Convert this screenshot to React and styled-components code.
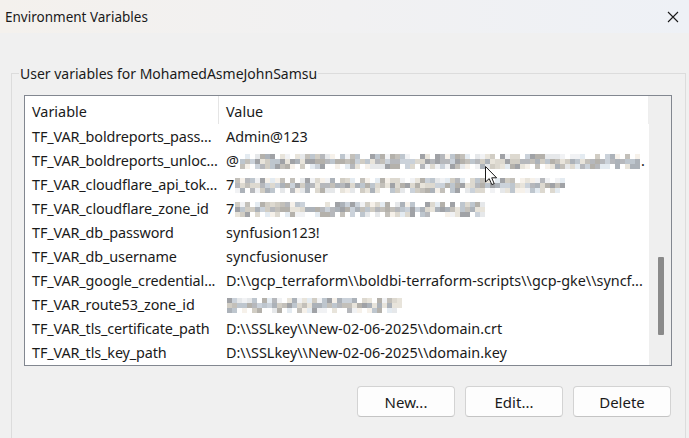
import React from "react";
import styled, { createGlobalStyle } from "styled-components";

const GlobalStyle = createGlobalStyle`
  html, body {
    margin: 0;
    padding: 0;
    background: #f0f0f0;
  }
  * {
    box-sizing: border-box;
  }
`;

const rows = [
  { name: "TF_VAR_boldreports_pass...", value: "Admin@123" },
  { name: "TF_VAR_boldreports_unloc...", lead: "@", blur: 404, seed: 3, tail: "." },
  { name: "TF_VAR_cloudflare_api_tok...", lead: "7", blur: 331, seed: 7 },
  { name: "TF_VAR_cloudflare_zone_id", lead: "7", blur: 251, seed: 11 },
  { name: "TF_VAR_db_password", value: "synfusion123!" },
  { name: "TF_VAR_db_username", value: "syncfusionuser" },
  {
    name: "TF_VAR_google_credential...",
    value: "D:\\\\gcp_terraform\\\\boldbi-terraform-scripts\\\\gcp-gke\\\\syncf...",
  },
  { name: "TF_VAR_route53_zone_id", blur: 178, seed: 19 },
  { name: "TF_VAR_tls_certificate_path", value: "D:\\\\SSLkey\\\\New-02-06-2025\\\\domain.crt" },
  { name: "TF_VAR_tls_key_path", value: "D:\\\\SSLkey\\\\New-02-06-2025\\\\domain.key" },
];

// pixelated (redacted) value, drawn as a mosaic of blocks
const palette = ["#a9acb0", "#b8b5ae", "#c9c4ba", "#9ea4ad", "#d7d2c8", "#b3bcc6", "#8f9296", "#c2cad3", "#e4dfd5", "#a7a39c"];
const light = ["#ffffff", "#eef0f2", "#e2e4e6", "#f4efe6", "#dfe7ef", "#ffffff", "#ffffff"];

function Mosaic({ width, seed }) {
  const cols = Math.floor(width / 5);
  let s = seed * 9301 + 49297;
  const rnd = () => {
    s = (s * 9301 + 49297) % 233280;
    return s / 233280;
  };
  const grid = [0, 1, 2].map((r) =>
    Array.from({ length: cols }, () => {
      if (r === 1) return palette[Math.floor(rnd() * palette.length)];
      return rnd() > 0.45 ? palette[Math.floor(rnd() * palette.length)] : light[Math.floor(rnd() * light.length)];
    })
  );
  return (
    <MosaicBox>
      {grid.map((line, r) => (
        <MosaicLine key={r}>
          {line.map((c, i) => (
            <Block key={i} style={{ background: c }} />
          ))}
        </MosaicLine>
      ))}
    </MosaicBox>
  );
}

export default function App() {
  return (
    <>
      <GlobalStyle />
      <Window>
        <TitleBar>
          <Title>Environment Variables</Title>
          <Close aria-label="Close">
            <svg width="12" height="12" viewBox="0 0 12 12">
              <path d="M1 1 L11 11 M11 1 L1 11" stroke="#1a1a1a" strokeWidth="1.1" fill="none" />
            </svg>
          </Close>
        </TitleBar>
        <Body>
          <Group>
            <Legend>User variables for MohamedAsmeJohnSamsu</Legend>
            <GroupContent>
              <List>
                <Table>
                  <HeaderRow>
                    <HeadCell $first>Variable</HeadCell>
                    <HeadCell>Value</HeadCell>
                  </HeaderRow>
                  {rows.map((r) => (
                    <Row key={r.name}>
                      <NameCell>{r.name}</NameCell>
                      <ValueCell>
                        {r.value}
                        {r.lead}
                        {r.blur ? <Mosaic width={r.blur} seed={r.seed} /> : null}
                        {r.tail ? <Tail>{r.tail}</Tail> : null}
                      </ValueCell>
                    </Row>
                  ))}
                </Table>
                <ScrollTrack>
                  <Thumb />
                </ScrollTrack>
                <Cursor width="13" height="20" viewBox="0 0 13 20">
                  <path
                    d="M0.5 0.5 L0.5 16 L4.2 12.6 L6.8 18.6 L9.2 17.6 L6.7 11.8 L11.6 11.8 Z"
                    fill="#ffffff"
                    stroke="#1a1a1a"
                    strokeWidth="1"
                    strokeLinejoin="round"
                  />
                </Cursor>
              </List>
              <Buttons>
                <Button>New...</Button>
                <Button>Edit...</Button>
                <Button>Delete</Button>
              </Buttons>
            </GroupContent>
          </Group>
        </Body>
      </Window>
    </>
  );
}

const Window = styled.div`
  width: 689px;
  height: 438px;
  overflow: hidden;
  display: flex;
  flex-direction: column;
  background: #f0f0f0;
  font-family: "Noto Sans", "Open Sans", sans-serif;
  color: #1a1a1a;
`;

const TitleBar = styled.div`
  height: 33px;
  flex: none;
  display: flex;
  align-items: center;
  justify-content: space-between;
  padding: 0 8px 0 5px;
  background: linear-gradient(90deg, #f4f1ed 0%, #f1f1f2 50%, #eef1f6 100%);
`;

const Title = styled.div`
  font-size: 13.5px;
  color: #1a1a1a;
`;

const Close = styled.div`
  width: 16px;
  height: 16px;
  display: flex;
  align-items: center;
  justify-content: center;
`;

const Body = styled.div`
  flex: 1;
  padding: 31px 3px 0 11px;
`;

const Group = styled.fieldset`
  margin: 0;
  padding: 0;
  border: 1px solid #dcdcdc;
  min-width: 0;
`;

const Legend = styled.legend`
  margin-left: 7px;
  padding: 0 1px;
  font-size: 14px;
  color: #1a1a1a;
`;

const GroupContent = styled.div`
  padding: 12px 13px 40px 12px;
`;

const List = styled.div`
  position: relative;
  height: 271px;
  display: flex;
  border: 1px solid #828790;
  background: #ffffff;
  overflow: hidden;
`;

const Table = styled.div`
  flex: 1;
  min-width: 0;
  display: flex;
  flex-direction: column;
`;

const HeaderRow = styled.div`
  height: 28px;
  flex: none;
  display: grid;
  grid-template-columns: 194px 1fr;
  border-right: 1px solid #eeeeee;
`;

const HeadCell = styled.div`
  display: flex;
  align-items: center;
  padding: 3px 0 0 7px;
  font-size: 14.4px;
  border-right: ${(p) => (p.$first ? "1px solid #e5e5e5" : "none")};
`;

const Row = styled.div`
  height: 24px;
  flex: none;
  display: grid;
  grid-template-columns: 194px 1fr;
  font-size: 14.4px;
`;

const NameCell = styled.div`
  display: flex;
  align-items: center;
  padding: 0 0 0 7px;
  white-space: nowrap;
  overflow: hidden;
  letter-spacing: -0.12px;
`;

const ValueCell = styled.div`
  display: flex;
  align-items: center;
  padding: 0 0 0 7px;
  white-space: nowrap;
  overflow: hidden;
`;

const Tail = styled.span`
  margin-left: 1px;
`;

const MosaicBox = styled.span`
  display: inline-flex;
  flex-direction: column;
  margin: 2px 0 0 1px;
`;

const MosaicLine = styled.span`
  display: flex;
  height: 5px;
`;

const Block = styled.span`
  width: 5px;
  height: 5px;
  opacity: 0.85;
`;

const ScrollTrack = styled.div`
  width: 22px;
  flex: none;
  background: #efefef;
  display: flex;
  flex-direction: column;
  align-items: center;
  padding-top: 161px;
  padding-left: 1px;
`;

const Thumb = styled.div`
  width: 6px;
  height: 78px;
  background: #8a8a8a;
  border-radius: 1px;
`;

const Cursor = styled.svg`
  position: absolute;
  left: 460px;
  top: 70px;
`;

const Buttons = styled.div`
  display: flex;
  justify-content: flex-end;
  gap: 10px;
  margin-top: 20px;
  padding-right: 1px;
`;

const Button = styled.button`
  width: 98px;
  height: 31px;
  border: 1px solid #d3d3d3;
  border-bottom-color: #c4c4c4;
  border-radius: 4px;
  background: #fdfdfd;
  font-family: "Noto Sans", "Open Sans", sans-serif;
  font-size: 15px;
  color: #1a1a1a;
  padding: 0;
`;
